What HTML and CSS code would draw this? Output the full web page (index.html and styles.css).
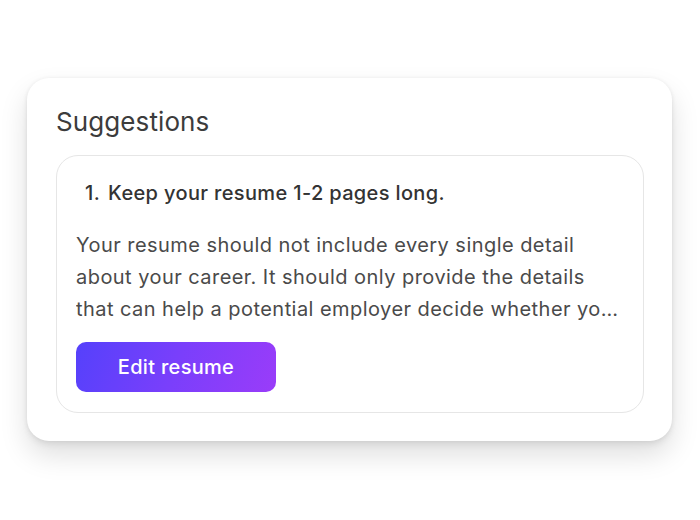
FILE: index.html
```html
<!DOCTYPE html>
<html>
<head>
<meta charset="utf-8">
<link rel="stylesheet" href="styles.css">
</head>
<body>
<div class="stage">
  <section class="card">
    <h2 class="title">Suggestions</h2>
    <div class="item">
      <h3 class="item-title"><span class="num">1.</span>Keep your resume 1-2 pages long.</h3>
      <p class="item-text">Your resume should not include every single detail about your career. It should only provide the details that can help a potential employer decide whether you are the right fit for the job.</p>
      <button class="btn">Edit resume</button>
    </div>
  </section>
</div>
</body>
</html>
```

FILE: styles.css
```css
html, body {
  margin: 0;
  padding: 0;
  background: #ffffff;
}
body {
  width: 700px;
  height: 520px;
  overflow: hidden;
  font-family: Inter, "Noto Sans", sans-serif;
}
.stage {
  padding: 78px 28px 0 27px;
}
.card {
  width: 645px;
  box-sizing: border-box;
  background: #fff;
  border-radius: 22px;
  padding: 28px 28px 28px 29px;
  box-shadow: 0 0 4px rgba(0,0,0,0.06), 0 14px 28px rgba(0,0,0,0.13), 0 4px 6px rgba(0,0,0,0.06);
}
.title {
  margin: 0 0 17px;
  font-size: 26px;
  line-height: 32px;
  font-weight: 400;
  color: #3c3c3c;
  letter-spacing: 0.1px;
}
.item {
  border: 1px solid #e6e6e6;
  border-radius: 22px;
  padding: 21px 20px 20px 19px;
}
.item-title {
  margin: 0 0 20px 9px;
  font-size: 20px;
  line-height: 32px;
  font-weight: 500;
  color: #333;
  letter-spacing: 0.35px;
}
.num {
  margin-right: 8px;
}
.item-text {
  margin: 0 0 17px;
  font-size: 20px;
  line-height: 32px;
  font-weight: 400;
  color: #4a4a4a;
  letter-spacing: 0.45px;
  display: -webkit-box;
  -webkit-line-clamp: 3;
  -webkit-box-orient: vertical;
  overflow: hidden;
}
.btn {
  display: block;
  width: 200px;
  height: 50px;
  border: 0;
  border-radius: 10px;
  background: linear-gradient(110deg, #5541fb 0%, #7a3ffb 50%, #9a3cf9 100%);
  color: #fff;
  font-family: Inter, "Noto Sans", sans-serif;
  font-size: 20px;
  font-weight: 500;
  letter-spacing: 0.3px;
}
```
